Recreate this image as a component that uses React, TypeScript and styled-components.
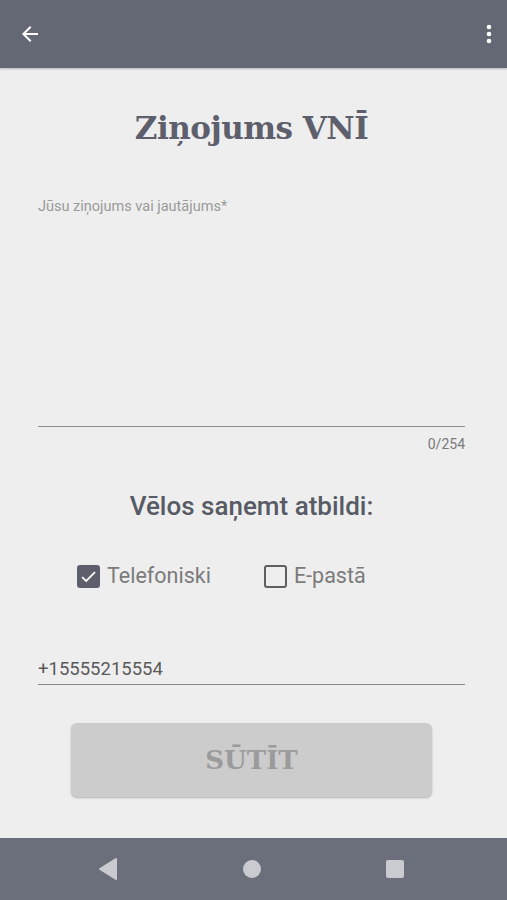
import * as React from "react";
import styled, { createGlobalStyle } from "styled-components";

const GlobalStyle = createGlobalStyle`
  html, body {
    margin: 0;
    padding: 0;
    background: #eeeeee;
  }
  * {
    box-sizing: border-box;
  }
`;

const Screen = styled.div`
  width: 507px;
  height: 900px;
  display: flex;
  flex-direction: column;
  background: #eeeeee;
  font-family: Roboto, "Noto Sans", sans-serif;
  overflow: hidden;
`;

const TopBar = styled.div`
  height: 68px;
  flex-shrink: 0;
  background: #646874;
  display: flex;
  align-items: center;
  justify-content: space-between;
  padding: 0 14px 0 18px;
  box-shadow: 0 1px 2px rgba(0, 0, 0, 0.25);
`;

const IconButton = styled.div`
  display: flex;
  align-items: center;
  justify-content: center;
`;

const Content = styled.div`
  flex: 1;
  display: flex;
  flex-direction: column;
  padding: 0 42px 0 38px;
`;

const Title = styled.h1`
  margin: 37px 0 0;
  text-align: center;
  font-family: "DejaVu Serif", "Liberation Serif", serif;
  font-weight: bold;
  font-size: 31px;
  line-height: 46px;
  color: #5d606c;
  letter-spacing: -0.5px;
`;

const FieldLabel = styled.div`
  margin-top: 47px;
  font-size: 14.5px;
  line-height: 18px;
  color: #9a9a9a;
`;

const MessageArea = styled.div`
  height: 211px;
  border-bottom: 1.5px solid #8e8e8e;
`;

const Counter = styled.div`
  margin-top: 8px;
  text-align: right;
  font-size: 14px;
  line-height: 18px;
  color: #7a7a7a;
`;

const Subtitle = styled.h2`
  margin: 37px 0 0;
  text-align: center;
  font-size: 26px;
  font-weight: 500;
  line-height: 32px;
  color: #575b65;
`;

const Options = styled.div`
  display: flex;
  align-items: center;
  gap: 53px;
  margin-top: 41px;
  padding-left: 39px;
`;

const Option = styled.label`
  display: flex;
  align-items: center;
  gap: 7px;
  font-size: 21.5px;
  line-height: 26px;
  color: #7b7b7b;
`;

const Box = styled.span<{ $checked?: boolean }>`
  width: 23px;
  height: 23px;
  border-radius: 3px;
  display: flex;
  align-items: center;
  justify-content: center;
  background: ${(p) => (p.$checked ? "#5d606c" : "transparent")};
  border: ${(p) => (p.$checked ? "none" : "2.5px solid #5f5f5f")};
`;

const PhoneField = styled.div`
  margin-top: 68px;
  padding-bottom: 3px;
  font-size: 18.5px;
  line-height: 24px;
  color: #5a5a5a;
  border-bottom: 1.5px solid #8a8a8a;
`;

const SendButton = styled.button`
  margin: 38px auto 0 33px;
  width: 361px;
  height: 74px;
  border: none;
  border-radius: 6px;
  background: #cccccc;
  box-shadow: 0 1px 2px rgba(0, 0, 0, 0.25);
  font-family: "DejaVu Serif", "Liberation Serif", serif;
  font-weight: bold;
  font-size: 26px;
  color: #9b9b9b;
`;

const NavBar = styled.div`
  height: 62px;
  flex-shrink: 0;
  background: #6b6f7b;
  display: flex;
  align-items: center;
  justify-content: center;
  gap: 123px;
  padding-right: 6px;
`;

export default function App() {
  return (
    <>
      <GlobalStyle />
      <Screen>
        <TopBar>
          <IconButton>
            <svg width="24" height="24" viewBox="0 0 24 24">
              <path
                d="M20 11H7.83l5.59-5.59L12 4l-8 8 8 8 1.41-1.41L7.83 13H20v-2z"
                fill="#ffffff"
              />
            </svg>
          </IconButton>
          <IconButton>
            <svg width="8" height="24" viewBox="0 0 8 24">
              <circle cx="4" cy="5" r="2.3" fill="#ffffff" />
              <circle cx="4" cy="12" r="2.3" fill="#ffffff" />
              <circle cx="4" cy="19" r="2.3" fill="#ffffff" />
            </svg>
          </IconButton>
        </TopBar>
        <Content>
          <Title>Ziņojums VNĪ</Title>
          <FieldLabel>Jūsu ziņojums vai jautājums*</FieldLabel>
          <MessageArea />
          <Counter>0/254</Counter>
          <Subtitle>Vēlos saņemt atbildi:</Subtitle>
          <Options>
            <Option>
              <Box $checked>
                <svg width="19" height="19" viewBox="0 0 24 24">
                  <path
                    d="M9 16.2L4.8 12l-1.6 1.6L9 19.4 21 7.4l-1.6-1.6L9 16.2z"
                    fill="#ffffff"
                  />
                </svg>
              </Box>
              Telefoniski
            </Option>
            <Option>
              <Box />
              E-pastā
            </Option>
          </Options>
          <PhoneField>+15555215554</PhoneField>
          <SendButton>SŪTĪT</SendButton>
        </Content>
        <NavBar>
          <svg width="22" height="24" viewBox="0 0 22 24">
            <path
              d="M19 2 L3 12 L19 22 Z"
              fill="#c9cbd1"
              strokeLinejoin="round"
              stroke="#c9cbd1"
              strokeWidth="2"
            />
          </svg>
          <svg width="20" height="20" viewBox="0 0 20 20">
            <circle cx="10" cy="10" r="9" fill="#c9cbd1" />
          </svg>
          <svg width="20" height="20" viewBox="0 0 20 20">
            <rect x="1" y="1" width="18" height="18" rx="2" fill="#c9cbd1" />
          </svg>
        </NavBar>
      </Screen>
    </>
  );
}
